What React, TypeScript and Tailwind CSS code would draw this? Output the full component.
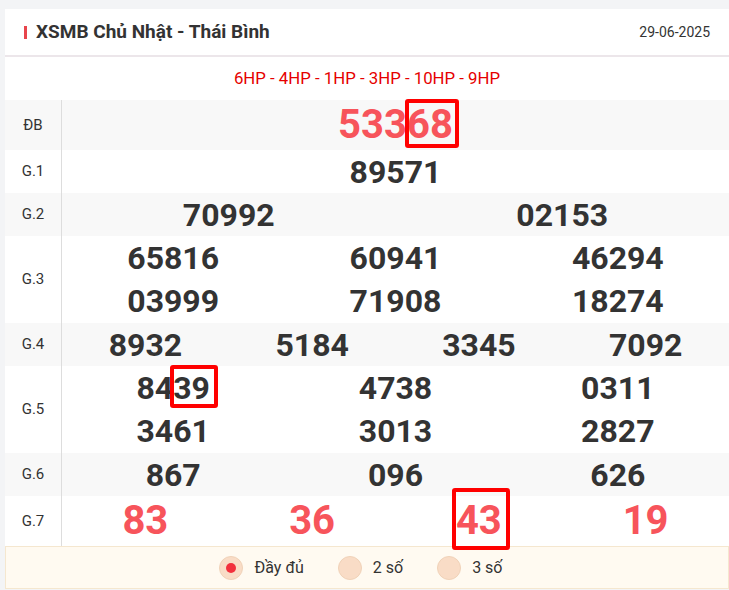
import React from "react";

type Box = string;

function Num({ v, red, size, box }: { v: string; red?: boolean; size: string; box?: Box }) {
  const color = red ? "text-[#f7545b]" : "text-[#333333]";
  if (!box) {
    return <span className={`${size} ${color} font-bold leading-none`}>{v}</span>;
  }
  return (
    <span className={`${size} ${color} font-bold leading-none`}>
      {v.slice(0, v.length - 2)}
      <span className="relative">
        {v.slice(-2)}
        <span className={`pointer-events-none absolute rounded-[3px] border-4 border-[#ff0000] ${box}`} />
      </span>
    </span>
  );
}

function Row({
  label,
  bg,
  h,
  children,
}: {
  label: string;
  bg: boolean;
  h: string;
  children: React.ReactNode;
}) {
  return (
    <div className={`flex ${bg ? "bg-[#f8f8f8]" : "bg-white"} ${h}`}>
      <div className="flex w-[57px] shrink-0 items-center justify-center border-r border-[#dddddd] text-[15px] text-[#333333]">
        {label}
      </div>
      <div className="flex flex-1 flex-col">{children}</div>
    </div>
  );
}

function Line({ cols, children, h }: { cols: string; children: React.ReactNode; h: string }) {
  return <div className={`grid ${cols} ${h} items-center justify-items-center`}>{children}</div>;
}

export default function App() {
  const N = "text-[32px]";
  const B = "text-[40px]";
  return (
    <div
      className="min-h-[590px] bg-[#f3f4f6] pl-[5px] pt-[9px]"
      style={{ fontFamily: "Roboto, 'Noto Sans', sans-serif" }}
    >
      <div className="bg-white">
        <div className="flex h-[48px] items-center justify-between border-b-2 border-[#ece6ea] pl-[19px] pr-[19px]">
          <div className="flex items-center">
            <span className="mr-[9px] h-[13px] w-[3px] bg-[#e8454c]" />
            <span className="text-[19px] font-bold text-[#333333]">XSMB Chủ Nhật - Thái Bình</span>
          </div>
          <span className="text-[14px] text-[#333333]">29-06-2025</span>
        </div>
        <div className="flex h-[43px] items-center justify-center text-[16.8px] text-[#e60000]">
          6HP - 4HP - 1HP - 3HP - 10HP - 9HP
        </div>

        <Row label="ĐB" bg h="h-[50px]">
          <Line cols="grid-cols-1" h="h-[50px]">
            <Num v="53368" red size={B} box="-left-[2px] -right-[6px] -top-[2px] bottom-0" />
          </Line>
        </Row>
        <Row label="G.1" bg={false} h="h-[43px]">
          <Line cols="grid-cols-1" h="h-[43px]">
            <Num v="89571" size={N} />
          </Line>
        </Row>
        <Row label="G.2" bg h="h-[43px]">
          <Line cols="grid-cols-2" h="h-[43px]">
            <Num v="70992" size={N} />
            <Num v="02153" size={N} />
          </Line>
        </Row>
        <Row label="G.3" bg={false} h="h-[87px]">
          <Line cols="grid-cols-3" h="h-[43px]">
            <Num v="65816" size={N} />
            <Num v="60941" size={N} />
            <Num v="46294" size={N} />
          </Line>
          <Line cols="grid-cols-3" h="h-[44px]">
            <Num v="03999" size={N} />
            <Num v="71908" size={N} />
            <Num v="18274" size={N} />
          </Line>
        </Row>
        <Row label="G.4" bg h="h-[43px]">
          <Line cols="grid-cols-4" h="h-[43px]">
            <Num v="8932" size={N} />
            <Num v="5184" size={N} />
            <Num v="3345" size={N} />
            <Num v="7092" size={N} />
          </Line>
        </Row>
        <Row label="G.5" bg={false} h="h-[87px]">
          <Line cols="grid-cols-3" h="h-[43px]">
            <Num v="8439" size={N} box="-left-[3px] -right-[8px] -top-[4px] -bottom-[1px]" />
            <Num v="4738" size={N} />
            <Num v="0311" size={N} />
          </Line>
          <Line cols="grid-cols-3" h="h-[44px]">
            <Num v="3461" size={N} />
            <Num v="3013" size={N} />
            <Num v="2827" size={N} />
          </Line>
        </Row>
        <Row label="G.6" bg h="h-[43px]">
          <Line cols="grid-cols-3" h="h-[43px]">
            <Num v="867" size={N} />
            <Num v="096" size={N} />
            <Num v="626" size={N} />
          </Line>
        </Row>
        <Row label="G.7" bg={false} h="h-[50px]">
          <Line cols="grid-cols-4" h="h-[50px]">
            <Num v="83" red size={B} />
            <Num v="36" red size={B} />
            <Num v="43" red size={B} box="-left-[4px] -right-[8px] -top-[9px] -bottom-[6px]" />
            <Num v="19" red size={B} />
          </Line>
        </Row>

        <div className="flex h-[43px] items-center justify-center border border-[#f5e7cf] bg-[#fffaf1] pr-[13px] text-[16px] text-[#333333]">
          <div className="flex items-center">
            <span className="flex h-[24px] w-[24px] items-center justify-center rounded-full border border-[#f0d2b8] bg-[#f9dcc6]">
              <span className="h-[10px] w-[10px] rounded-full bg-[#f2303c]" />
            </span>
            <span className="ml-[12px]">Đầy đủ</span>
          </div>
          <div className="ml-[34px] flex items-center">
            <span className="h-[24px] w-[24px] rounded-full border border-[#f0d2b8] bg-[#f9dcc6]" />
            <span className="ml-[11px]">2 số</span>
          </div>
          <div className="ml-[34px] flex items-center">
            <span className="h-[24px] w-[24px] rounded-full border border-[#f0d2b8] bg-[#f9dcc6]" />
            <span className="ml-[11px]">3 số</span>
          </div>
        </div>
      </div>
    </div>
  );
}
